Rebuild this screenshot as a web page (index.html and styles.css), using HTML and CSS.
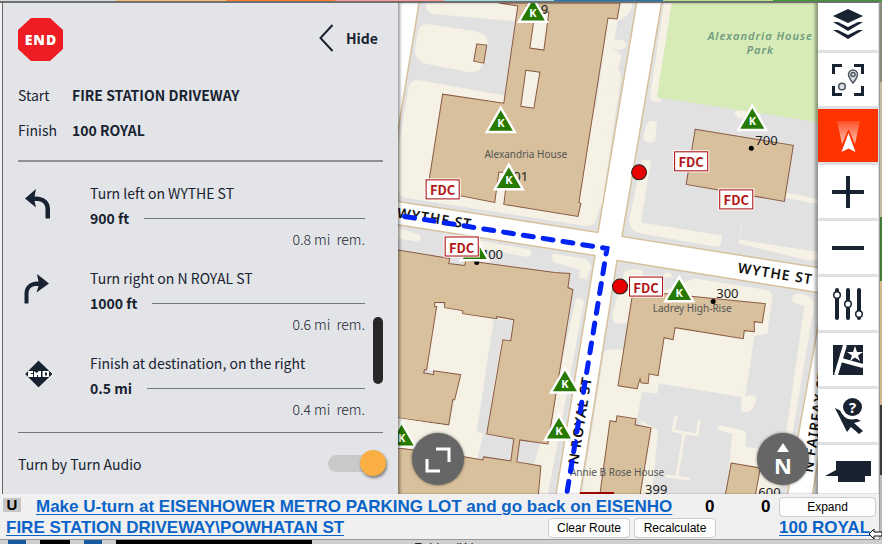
FILE: index.html
```html
<!DOCTYPE html>
<html lang="en">
<head>
<meta charset="utf-8">
<title>Route guidance</title>
<link rel="stylesheet" href="styles.css">
</head>
<body>
<div class="strip"><i class="s1"></i><i class="s2"></i><i class="s3"></i><i class="s4"></i><i class="s5"></i><i class="s6"></i><i class="s7"></i><i class="s8"></i></div>
<div class="desk">
<div class="window">
<main class="main">
  <section class="panel">
    <header class="panel-head">
      <svg class="end" viewBox="0 0 45 43" role="img" aria-label="End"><path d="M13 0H32L45 12V31L32 43H13L0 31V12Z" fill="#ee1c23"/><text x="23" y="27" text-anchor="middle">END</text></svg>
      <button class="hide" type="button"><svg viewBox="0 0 14 28"><path d="M13 1L1 14L13 27"/></svg>Hide</button>
    </header>
    <dl class="ends">
      <dt>Start</dt><dd>FIRE STATION DRIVEWAY</dd>
      <dt>Finish</dt><dd>100 ROYAL</dd>
    </dl>
    <div class="steps">
      <article class="step">
        <svg class="turn" viewBox="0 0 30 30"><path d="M2 9.500L13 0L11.500 7.500C21 7 27 12 27 20V29.500H22.500V20C22.500 14 18 11.500 11.500 12L13 18.500Z"/></svg>
        <div class="step-body"><p>Turn left on WYTHE ST</p><div class="dist"><b>900 ft</b></div><p class="rem">0.8 mi&nbsp; rem.</p></div>
      </article>
      <article class="step">
        <svg class="turn" viewBox="0 0 30 30"><path d="M26 9.500L14 0L15.500 7.500C7 7 1.500 12 1.500 20V29.500H5.500V20C5.500 14 9 11.500 15.500 12L13.500 18.500Z"/></svg>
        <div class="step-body"><p>Turn right on N ROYAL ST</p><div class="dist"><b>1000 ft</b></div><p class="rem">0.6 mi&nbsp; rem.</p></div>
      </article>
      <article class="step">
        <svg class="turn" viewBox="0 0 30 30"><path d="M15.500 1L30 15L15.500 29L1.500 15Z" stroke="#fff"/><path d="M5 12H10V14H8V15H10V18H5ZM11 12L13.500 14L16 12H18V18H11ZM19.500 12H26V18H19.500Z" style="fill:#fff"/><path d="M14 16h1v2h-1zM22 13.500h2v3h-2z"/></svg>
        <div class="step-body"><p>Finish at destination, on the right</p><div class="dist"><b>0.5 mi</b></div><p class="rem">0.4 mi&nbsp; rem.</p></div>
      </article>
      <span class="thumb"></span>
    </div>
    <label class="audio" for="audio">Turn by Turn Audio<input id="audio" type="checkbox" role="switch" checked></label>
  </section>

  <section class="map">
    <svg class="canvas" viewBox="398 3 420 490" preserveAspectRatio="xMidYMid slice">
      <defs>
        <g id="k"><path d="M0-28L16 0H-16Z" fill="#fff"/><path d="M0-23L12-2.500H-12Z" fill="#267a00"/><text y="-6" text-anchor="middle">K</text></g>
        <g id="fdc"><rect x="-1" y="-1" width="36" height="22" fill="#fff"/><rect x=".5" y=".5" width="33" height="19" fill="#fff" stroke="#a80000"/><text x="17" y="16" text-anchor="middle">FDC</text></g>
      </defs>
      <rect x="390" width="440" height="500" fill="#fff"/>
      <g class="block">
        <path d="M420 0L398 133V201L598 232L637 0Z"/>
        <path d="M662 0L622 236L830 269V0Z"/>
        <path d="M390 223L595 255L555 500H390Z"/>
        <path d="M617 260L830 294L818 323L786 500H579Z"/>
        <path d="M820 445L811 500H830Z"/>
      </g>
      <g class="lawn">
        <path d="M426 3Q427 13 433 14L515 21L518 3Z"/>
        <path d="M427 24L475 31Q488 33 488 44L484 62Q481 73 470 72L427 64Q416 61 415 51L418 33Q420 24 427 24Z"/>
        <path d="M409 88Q411 79 420 80L504 95L596 107L608 18H618L613 50Q626 52 618 67Q621 71 614 84L597 218Q594 227 583 225L404 197Q400 196 399 188V145Z"/>
        <path d="M620 3H632Q632 14 623 18L618 21ZM614 40Q627 38 626 47Q621 51 612 49ZM610 68Q621 66 621 77L602 203L597 214Z"/>
        <path d="M664 3H672L657 96Q661 98 661 101Q650 104 650 95ZM646 125Q650 118 657 122L655 141Q649 145 643 139ZM642 160H651L641 221Q642 223 647 223L722 235L721 243Q719 248 709 245L641 233Q629 230 629 219ZM737 110L760 113V118H739Q734 116 734 112ZM741 225L738 243L809 260L820 258V252L739 239L742 224ZM785 192L820 199V204L784 197Z"/>
        <path d="M398 227L419 234Q424 238 418 241L398 238ZM452 235Q442 235 443 241L525 256Q535 257 530 249ZM554 253L583 258Q592 261 591 268L587 279L579 277L580 269L555 262Q549 258 554 253ZM576 298H582Q585 300 583 307L548 493H520L540 458Z"/>
        <path d="M434 302L514 318L477 459L398 447V420L450 424L460 374L426 369Z"/>
        <path d="M624 272Q631 266 643 270L640 322L616 323Q611 320 613 311ZM665 272Q672 272 673 277H663ZM694 278L765 289Q773 291 772 297L767 333L754 335L745 396Q759 391 755 403Q750 415 741 410V396L659 382L657 393L642 391L634 433L656 436L640 493H582L604 352Q605 347 624 349L640 300ZM791 301Q793 290 804 294Q815 297 813 309L784 480L775 493H726L732 433L718 429Q716 424 722 425L744 430Q747 432 745 446L783 451L804 306Z"/>
        <path d="M541 440H548L533 493H525ZM641 420L634 493H652L658 429Z"/>
      </g>
      <path d="M675 327L750 339L740 396L655 382L664 338Z" fill="#f5f1e4"/>
      <path d="M676 415L673 430L697 434L699 419M684 432L677 475M665 475L690 478" fill="none" stroke="#f5f1e4" stroke-width="3"/>
      <path d="M672 0L657 97L663 98L818 122V0Z" fill="#d6ebb5"/>
      <g class="building">
        <path d="M499 3L518 6L504 103L443 94L428 189L495 202L499 172H508L504 204L578 216L581 203L579 202L608 18L617 19L620 3Z"/>
        <path d="M477 44L487 45L484 63L474 61Z"/>
        <path d="M695 129L793 145L784 201L686 184Z"/>
        <path fill-rule="evenodd" d="M390 248L450 258L449 263L465 265L466 260L555 272L570 273L568 287L573 289L548 443L520 439L517 461L541 465L538 500H390V416L449 424L453 399H455L461 374L434 370V374L424 372L425 369H427L437 306H435V302H445V307L463 310V313L497 318V316L514 319L511 340L503 339L487 433L514 438L511 460L484 456L483 459L460 455L390 446V248Z"/>
        <path d="M390 248L398 249V416L390 415Z" stroke="none"/>
        <path d="M633 290L765 303L762 322L754 321V331L744 330L743 338L675 327L673 339L664 337L658 375L649 373L648 383L641 382L640 378L637 388L618 385Z"/>
        <path d="M610 420L616 421L617 415L636 418L635 424L651 427L639 500H599ZM731 462L760 467L754 500H724Z"/>
      </g>
      <path d="M398 417L449 425L445 448L398 441Z" fill="#f5f1e4"/>
      <path class="hole" d="M535 13L549 12L544 50L530 48ZM526 70L540 72L534 108L521 106Z"/>
      <path d="M494 318L513 320L510 339L502 338L486 433L477 431Z" fill="#e1e1e1"/>
      <g class="name">
        <text x="526" y="158" text-anchor="middle">Alexandria House</text>
        <text x="692" y="311" text-anchor="middle">Ladrey High-Rise</text>
        <text x="617" y="475" text-anchor="middle">Annie B Rose House</text>
      </g>
      <g class="park"><text x="760" y="40" text-anchor="middle">Alexandria House</text><text x="760" y="54" text-anchor="middle">Park</text></g>
      <g class="street">
        <text transform="translate(397 217) rotate(9)">WYTHE ST</text>
        <text transform="translate(737 272) rotate(9)">WYTHE ST</text>
        <text transform="translate(578 464) rotate(-81)">N ROYAL ST</text>
        <text transform="translate(812 472) rotate(-81)">N FAIRFAX ST</text>
      </g>
      <g class="num"><text x="755" y="145">700</text><text x="716" y="297">300</text><text x="645" y="493">399</text><text x="758" y="496">600</text><text x="506" y="181">701</text><text x="481" y="258">400</text><text x="526" y="14">709</text></g>
      <g><circle cx="751" cy="148" r="2.500"/><circle cx="713" cy="301" r="2.500"/><circle cx="477" cy="262" r="2.500"/></g>
      <path d="M405 216L607 248L566 498" fill="none" stroke="#0022f5" stroke-width="5" stroke-linecap="round" stroke-dasharray="10 10"/>
      <g fill="#e80000" stroke="#222"><circle cx="639" cy="172" r="7.500"/><circle cx="620" cy="286" r="7.500"/></g>
      <g class="pin"><use href="#k" x="533" y="23"/><use href="#k" x="501" y="133"/><use href="#k" x="509" y="190"/><use href="#k" x="752" y="131"/><use href="#k" x="679" y="302"/><use href="#k" x="565" y="393"/><use href="#k" x="559" y="440"/><use href="#k" x="402" y="447"/><use href="#k" x="475" y="261"/></g>
      <g class="tag"><use href="#fdc" x="426" y="179"/><use href="#fdc" x="674" y="151"/><use href="#fdc" x="719" y="189"/><use href="#fdc" x="629" y="276"/><use href="#fdc" x="445" y="236"/><rect x="580" y="491" width="34" height="2" fill="#a80000"/></g>
    </svg>
    <button class="round fit" type="button" aria-label="Full extent"><svg viewBox="0 0 52 52"><path d="M24 16H37V29M15 26V38H28"/></svg></button>
    <button class="round north" type="button" aria-label="North up"><svg viewBox="0 0 52 52"><path class="solid" d="M26 10L32 19H20Z"/><text x="26" y="41" text-anchor="middle">N</text></svg></button>
  </section>

  <nav class="tools">
    <button type="button" aria-label="Layers"><svg viewBox="0 0 32 32"><path d="M16 1L31 8L16 15L1 8Z"/><path d="M1 14L6 14L16 19L26 14L31 14L16 23ZM1 22L6 22L16 27L26 22L31 22L16 31Z"/></svg></button>
    <button type="button" aria-label="Zoom to route"><svg viewBox="0 0 32 32"><path class="line" d="M1.500 10V1.500H10M22 1.500H30.500V10M30.500 22V30.500H22M10 30.500H1.500V22" stroke-width="3"/><g fill="#dfe2e8" stroke="#4c545f" stroke-width="1.500"><path d="M21 19C17 14 16.500 12 16.500 10.500A4.500 4.500 0 0 1 25.500 10.500C25.500 12 25 14 21 19Z"/><circle cx="21" cy="10.500" r="2"/><circle cx="10" cy="22.500" r="3.300"/></g></svg></button>
    <button type="button" class="on" aria-label="Navigate"><svg viewBox="0 0 32 32"><defs><linearGradient id="beam" x2="0" y2="1"><stop stop-color="#fff" stop-opacity=".15"/><stop offset="1" stop-color="#fff" stop-opacity=".7"/></linearGradient></defs><path fill="url(#beam)" d="M5 1H28L23 24L16.500 9L10 24Z"/><path fill="#fff" d="M16.500 13L23.500 32L16.500 28.500L9.500 32Z"/></svg></button>
    <button type="button" aria-label="Zoom in"><svg viewBox="0 0 32 32"><path d="M14 0H18V14H32V18H18V32H14V18H0V14H14Z"/></svg></button>
    <button type="button" aria-label="Zoom out"><svg viewBox="0 0 32 32"><path d="M0 14H32V18H0Z"/></svg></button>
    <button type="button" aria-label="Settings"><svg viewBox="0 0 32 32"><path class="line" d="M5 2V30M16 2V30M27 2V30" stroke-width="4" stroke-linecap="round"/><g fill="#fff" stroke="#182230" stroke-width="1.500"><circle cx="5" cy="7" r="3.300"/><circle cx="16" cy="16" r="3.300"/><circle cx="27" cy="26" r="3.300"/></g></svg></button>
    <button type="button" aria-label="Map bookmarks"><svg viewBox="0 0 32 32"><path d="M1 1H31V31H1Z"/><path d="M13 1L4 31M9 16L31 22" fill="none" stroke="#fff" stroke-width="4"/><path fill="#fff" d="M23 2L25 8H31L26 11.500L28 17L23 13.500L18 17L20 11.500L15 8H21Z"/></svg></button>
    <button type="button" aria-label="Identify"><svg viewBox="0 0 32 32"><path d="M3 8L29 21L22 23L31 31L27 34L19 27L15 32Z"/><ellipse cx="20" cy="7.500" rx="12" ry="12" fill="#fff"/><path d="M3 8L12 16L10 20Z"/><ellipse cx="20.500" cy="7" rx="9.500" ry="9"/><text x="20.500" y="13" text-anchor="middle">?</text></svg></button>
    <button type="button" aria-label="Messages"><svg class="wide" viewBox="0 0 46 32"><path d="M11 5H46V20H40V26H13V20H0L11 14Z"/></svg></button>
  </nav>
</main>

<footer class="foot">
  <div class="row">
    <span class="mark">U</span>
    <a href="#next">Make U-turn at EISENHOWER METRO PARKING LOT and go back on EISENHO</a>
    <b class="count first">0</b><b class="count">0</b>
    <button type="button" class="last">Expand</button>
  </div>
  <div class="row second">
    <a href="#start">FIRE STATION DRIVEWAY\POWHATAN ST</a>
    <span class="pair"><button type="button">Clear Route</button><button type="button">Recalculate</button></span>
    <a href="#finish" class="last">100 ROYAL</a>
  </div>
</footer>
</div>
<div class="edge"></div>
</div>
<div class="below"><i class="blue"></i><i class="black"></i><i class="blue b"></i><i class="black wide-bar"></i><span>Folder (K:)</span></div>
<svg class="cursor" viewBox="0 0 14 12"><path d="M1 6L6 1V4H14V8H6V11Z" fill="#fff" stroke="#111"/></svg>
</body>
</html>
```

FILE: styles.css
```css
* { box-sizing: border-box; }
body {
  margin: 0;
  min-height: 100vh;
  display: flex;
  flex-direction: column;
  position: relative;
  overflow: hidden;
  background: #f0f0f0;
  color: #182230;
  font-family: "Noto Sans CJK SC", "Noto Sans", sans-serif;
  font-size: 14px;
}
button { font: inherit; color: inherit; border: 0; padding: 0; background: none; cursor: pointer; }
p, dl, dd { margin: 0; }
svg { display: block; }

/* slivers of the desktop around the window */
.strip { display: flex; height: 1px; }
.strip i { flex: 110; }
.strip .s1 { flex: 117; background: #d5dcdc; }
.s2 { background: #fdbf6f; }
.s3 { background: #ff7f2a; }
.s4 { background: #fb9a99; }
.s5 { background: #a6d8e3; }
.s6 { background: #1f78b4; }
.s7 { background: #b2df8a; }
.s8 { background: #33a02c; }
.desk { flex: 1; display: flex; }
.edge { width: 2px; background: linear-gradient(#8a8a7c 0 15%, #c4bd9e 15% 40%, #3e7a33 40% 52%, #d3b98a 52% 75%, #3a3a3a 75% 88%, #bbb 88%); }
.below { display: flex; align-items: flex-start; height: 4px; padding-left: 8px; overflow: hidden; background: #cfcfcf; }
.below i { flex: none; width: 18px; height: 4px; }
.below .blue { background: #185a9f; }
.below .black { width: 30px; margin: 0 14px; background: #000; }
.below .wide-bar { width: 196px; }
.below span { margin-left: 88px; color: #222; font: 13px/16px "Liberation Sans", sans-serif; }

.window { flex: 1; min-width: 0; display: flex; flex-direction: column; border-top: 2px solid #707070; border-right: 1px solid #9a9a9a; border-bottom: 1px solid #999; }
.main { flex: 1; display: grid; grid-template-columns: 396px 1fr 61px; margin-left: 2px; }

.panel { display: flex; flex-direction: column; padding: 0 15px; border-left: 1px solid #666; background: #e2e4e8; }
.panel-head { display: flex; justify-content: space-between; align-items: flex-start; height: 75px; padding: 15px 5px 0 0; }
.end { width: 45px; height: 43px; }
.end text { fill: #fff; font: 800 14px "Open Sans", sans-serif; letter-spacing: 1px; }
.hide { display: flex; align-items: center; gap: 12px; height: 40px; font-weight: 700; }
.hide svg { width: 15px; height: 28px; fill: none; stroke: #182230; stroke-width: 2; }
.ends { display: grid; grid-template-columns: 54px 1fr; line-height: 35px; padding-bottom: 12px; border-bottom: 2px solid #8f9091; }
.ends dd { font-weight: 700; }
.steps { position: relative; display: grid; gap: 18px; padding: 19px 18px 14px 5px; border-bottom: 1px solid #777; }
.step { display: grid; grid-template-columns: 67px 1fr; line-height: 25px; }
.turn { width: 30px; height: 30px; margin-top: 8px; fill: #182230; }
.dist { display: flex; align-items: center; gap: 15px; height: 25px; }
.dist::after { content: ""; flex: 1; height: 1px; background: #73767b; }
.rem { line-height: 17px; text-align: right; font-weight: 300; }
.thumb { position: absolute; right: 0; bottom: 48px; width: 10px; height: 67px; border-radius: 5px; background: #282828; }
.audio { flex: 1; display: flex; align-items: center; justify-content: space-between; min-height: 60px; }
.audio input { appearance: none; position: relative; width: 55px; height: 17px; margin: 0; border-radius: 9px; background: #c9c9c9; }
.audio input::after { content: ""; position: absolute; right: -3px; top: -5px; width: 26px; height: 26px; border-radius: 50%; background: #f9af43; box-shadow: 1px 2px 3px #0007; }

.map { position: relative; min-width: 0; overflow: hidden; }
.canvas { position: absolute; z-index: -1; inset: 0; width: 100%; height: 100%; }
.map::before { content: ""; position: absolute; inset: 0; box-shadow: inset 3px 0 3px -1px #0006, inset -4px 0 3px -1px #0005; }
.block path { fill: #e1e1e1; stroke: #d7c09b; stroke-width: 1.500; }
.lawn { fill: #f5f1e4; }
.building { fill: #d7c09b; stroke: #8b5a44; }
.hole { fill: #f5f1e4; stroke: #8b5a44; }
.name { fill: #555; font: 10px "Noto Sans", sans-serif; }
.park { fill: #6f9a80; font: italic 600 11px "Noto Sans", sans-serif; letter-spacing: 1px; }
.street { fill: #111; font: 600 14px "Noto Sans", sans-serif; letter-spacing: 1px; }
.num { fill: #222; font: 13px "Noto Sans", sans-serif; }
.pin { fill: #fff; font: 700 11px "Noto Sans", sans-serif; }
.tag { fill: #b01818; font: 700 13px "Noto Sans CJK SC", sans-serif; }
.round { position: absolute; bottom: 9px; width: 52px; height: 52px; border-radius: 50%; background: #666; box-shadow: 0 0 3px #0008; }
.round svg { fill: none; stroke: #fff; stroke-width: 3; }
.round text, .round .solid { fill: #fff; stroke: none; font: 700 22px "Noto Sans", sans-serif; }
.fit { left: 14px; }
.north { right: 9px; }

.tools { display: flex; flex-direction: column; gap: 3px; overflow: hidden; padding-right: 1px; background: #dddfe3; }
.tools button { flex: none; display: grid; place-items: center; height: 53px; background: #fff; }
.tools button:first-child { margin-top: -6px; }
.tools button:last-child { height: 48px; padding-top: 6px; }
.tools .on { background: #ff3300; }
.tools svg { width: 32px; height: 32px; overflow: visible; fill: #182230; }
.tools .wide { width: 46px; }
.tools .line { fill: none; stroke: #182230; }
.tools text { fill: #fff; font: 700 15px "Noto Sans", sans-serif; }

.foot { display: grid; gap: 1px; padding: 3px 3px 1px; background: #f0f0f0; font: 700 17px/20px "Liberation Sans", sans-serif; color: #000; }
.row { display: flex; align-items: center; height: 20px; white-space: nowrap; }
.foot a { color: #0a64c8; text-decoration: underline; text-underline-offset: 2px; text-decoration-thickness: 1px; }
.mark { flex: none; width: 18px; height: 14px; margin: 0 15px 4px 0; background: #c6c6c6; font-size: 15px; line-height: 14px; text-align: center; }
.count { width: 18px; }
.count.first { width: 56px; margin-left: auto; }
.foot .last { flex: none; width: 97px; }
.foot button { width: 82px; height: 20px; border: 1px solid #ccc; border-radius: 4px; background: #fdfdfd; font: 12px "Liberation Sans", sans-serif; }
.second { padding-left: 3px; }
.pair { display: flex; gap: 4px; margin: 0 63px 0 auto; }
.cursor { position: absolute; right: 0; bottom: 4px; width: 14px; height: 12px; }
```
